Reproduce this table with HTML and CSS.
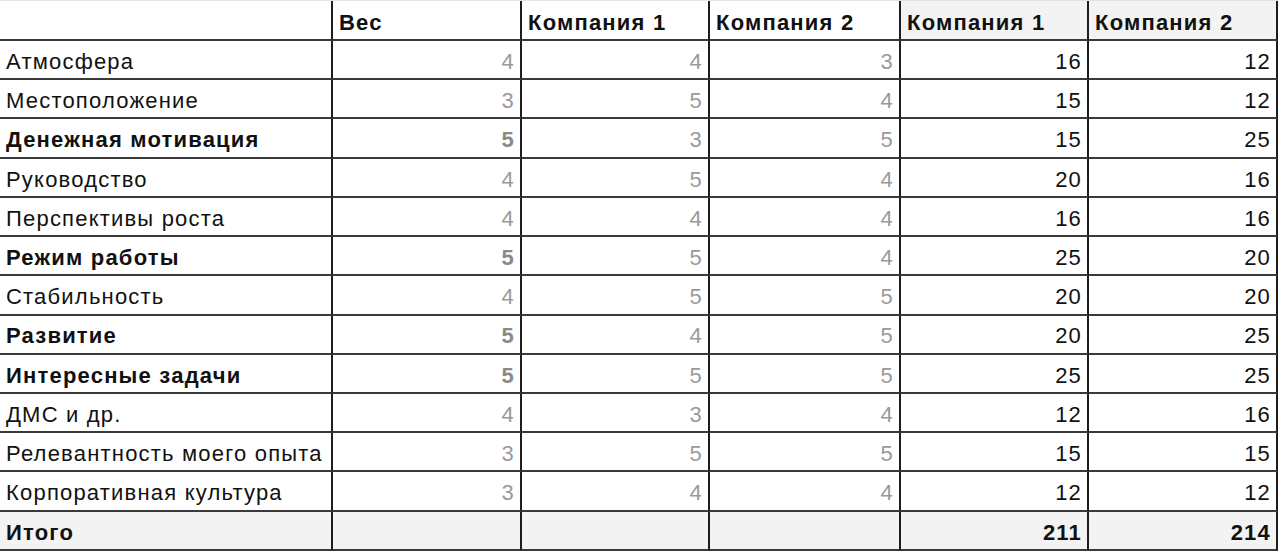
FILE: index.html
```html
<!DOCTYPE html>
<html lang="ru">
<head>
<meta charset="utf-8">
<title>Сравнение компаний</title>
<link rel="stylesheet" href="styles.css">
</head>
<body>
<div class="sheet">
  <div class="c"></div><div class="c b">Вес</div><div class="c b">Компания 1</div><div class="c b">Компания 2</div><div class="c b hd">Компания 1</div><div class="c b hd">Компания 2</div>

  <div class="c">Атмосфера</div><div class="c n g">4</div><div class="c n g">4</div><div class="c n g">3</div><div class="c n">16</div><div class="c n">12</div>
  <div class="c">Местоположение</div><div class="c n g">3</div><div class="c n g">5</div><div class="c n g">4</div><div class="c n">15</div><div class="c n">12</div>
  <div class="c b">Денежная мотивация</div><div class="c n g b">5</div><div class="c n g">3</div><div class="c n g">5</div><div class="c n">15</div><div class="c n">25</div>
  <div class="c">Руководство</div><div class="c n g">4</div><div class="c n g">5</div><div class="c n g">4</div><div class="c n">20</div><div class="c n">16</div>
  <div class="c">Перспективы роста</div><div class="c n g">4</div><div class="c n g">4</div><div class="c n g">4</div><div class="c n">16</div><div class="c n">16</div>
  <div class="c b">Режим работы</div><div class="c n g b">5</div><div class="c n g">5</div><div class="c n g">4</div><div class="c n">25</div><div class="c n">20</div>
  <div class="c">Стабильность</div><div class="c n g">4</div><div class="c n g">5</div><div class="c n g">5</div><div class="c n">20</div><div class="c n">20</div>
  <div class="c b">Развитие</div><div class="c n g b">5</div><div class="c n g">4</div><div class="c n g">5</div><div class="c n">20</div><div class="c n">25</div>
  <div class="c b">Интересные задачи</div><div class="c n g b">5</div><div class="c n g">5</div><div class="c n g">5</div><div class="c n">25</div><div class="c n">25</div>
  <div class="c">ДМС и др.</div><div class="c n g">4</div><div class="c n g">3</div><div class="c n g">4</div><div class="c n">12</div><div class="c n">16</div>
  <div class="c">Релевантность моего опыта</div><div class="c n g">3</div><div class="c n g">5</div><div class="c n g">5</div><div class="c n">15</div><div class="c n">15</div>
  <div class="c">Корпоративная культура</div><div class="c n g">3</div><div class="c n g">4</div><div class="c n g">4</div><div class="c n">12</div><div class="c n">12</div>

  <div class="c b tot">Итого</div><div class="c tot"></div><div class="c tot"></div><div class="c tot"></div><div class="c n b tot">211</div><div class="c n b tot">214</div>
</div>
</body>
</html>
```

FILE: styles.css
```css
html, body {
  margin: 0;
  padding: 0;
  background: #ffffff;
}

body {
  font-family: "Liberation Sans", Arial, sans-serif;
  font-size: 22px;
  letter-spacing: 1.2px;
  color: #111111;
}

.sheet {
  display: grid;
  grid-template-columns: 333px 189px 188px 191px 188px 189px;
  grid-template-rows: 40px repeat(13, 39.23px);
  width: 1278px;
  border-top: 1px solid #e4e4e4;
}

.c {
  box-sizing: border-box;
  display: flex;
  align-items: flex-end;
  justify-content: flex-start;
  padding: 0 5px 4px 6px;
  border-right: 2px solid #1e1e1e;
  border-bottom: 2px solid #3a3a3a;
  white-space: nowrap;
  overflow: hidden;
  line-height: 1.15;
}

.n {
  justify-content: flex-end;
}

.g {
  color: #9a9a9a;
}

.b {
  font-weight: bold;
}

.g.b {
  color: #8a8a8a;
}

.hd,
.tot {
  background: #f3f3f3;
}
```
